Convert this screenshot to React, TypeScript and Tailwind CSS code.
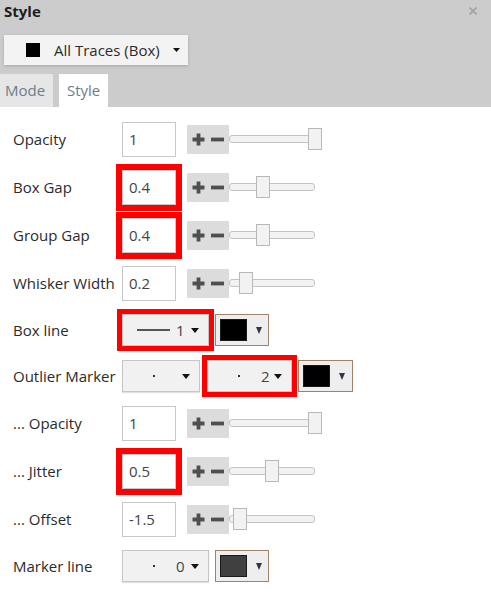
const sliderRows = [
  { label: 'Opacity', value: '1', pos: 1 },
  { label: 'Box Gap', value: '0.4', pos: 0.4, marked: true },
  { label: 'Group Gap', value: '0.4', pos: 0.4, marked: true },
  { label: 'Whisker Width', value: '0.2', pos: 0.2 },
]

const markerRows = [
  { label: '... Opacity', value: '1', pos: 1 },
  { label: '... Jitter', value: '0.5', pos: 0.5, marked: true },
  { label: '... Offset', value: '-1.5', pos: 0.125 },
]

function Caret({ className = '' }: { className?: string }) {
  return (
    <svg width="8" height="5" viewBox="0 0 8 5" className={className}>
      <polygon points="0,0 8,0 4,5" fill="#111" />
    </svg>
  )
}

function Stepper() {
  return (
    <div className="flex items-center w-[42px] h-[29px] bg-[#dcdcdc] pl-[5px]">
      <svg width="13" height="13" viewBox="0 0 13 13">
        <path d="M6.5 0.5V12.5M0.5 6.5H12.5" stroke="#4f4f4f" strokeWidth="3.8" />
      </svg>
      <svg width="13" height="13" viewBox="0 0 13 13" className="ml-[6px]">
        <path d="M0 6.5H13" stroke="#4f4f4f" strokeWidth="3.8" />
      </svg>
    </div>
  )
}

function Slider({ pos }: { pos: number }) {
  return (
    <div className="relative w-[86px] h-[22px] flex items-center">
      <div className="w-full h-[8px] rounded-[3px] border border-[#c4c4c4] bg-[#f2f2f2]" />
      <div
        className="absolute top-0 w-[14px] h-[22px] border border-[#b8b8b8] bg-[#f2f2f2]"
        style={{ left: `${pos * 86 - 7}px` }}
      />
    </div>
  )
}

function NumberRow({ label, value, pos, marked }: { label: string; value: string; pos: number; marked?: boolean }) {
  return (
    <div className="flex items-center h-12">
      <div className="w-[109px] text-[#2b2b2b]">{label}</div>
      <div
        className={
          'w-[54px] h-[35px] border border-[#c8c8c8] bg-white pl-[6px] flex items-center text-[#444] ' +
          (marked ? 'outline-[6px] outline-solid outline-[#ff0000]' : '')
        }
      >
        {value}
      </div>
      <div className="ml-[11px] flex items-center">
        <Stepper />
        <Slider pos={pos} />
      </div>
    </div>
  )
}

function Select({
  width,
  preview,
  num,
  marked,
}: {
  width: string
  preview: 'line' | 'dot'
  num?: string
  marked?: boolean
}) {
  return (
    <div
      className={
        width +
        ' h-[32px] border border-[#c6c6c6] bg-[#f1f1f1] shadow-[0_1px_1px_rgba(0,0,0,0.12)] flex items-center pl-[14px] pr-[9px] ' +
        (marked ? 'outline-[5px] outline-solid outline-[#ff0000]' : '')
      }
    >
      <div className="w-[33px] flex justify-center">
        {preview === 'line' ? (
          <div className="w-[33px] h-[2px] bg-[#555]" />
        ) : (
          <div className="w-[2px] h-[2px] bg-[#333]" />
        )}
      </div>
      {num && <span className="ml-[6px] text-[#444]">{num}</span>}
      <Caret className="ml-auto" />
    </div>
  )
}

function Swatch({ color, width }: { color: string; width: string }) {
  return (
    <div className={width + ' h-[32px] border border-[#a08268] bg-[#eeeeee] flex items-center pl-[4px]'}>
      <div className="w-[27px] h-[22px] border border-[#1a1a1a]" style={{ background: color }} />
      <svg width="6" height="7" viewBox="0 0 6 7" className="ml-[9px]">
        <polygon points="0,0 6,0 3,7" fill="#2f3747" />
      </svg>
    </div>
  )
}

export default function App() {
  return (
    <div className="w-[491px] h-[596px] overflow-hidden bg-white font-['Open_Sans',sans-serif] text-[15px]">
      <div className="bg-[#cccccc] pt-[1px]">
        <div className="flex items-center justify-between pl-1 pr-[14px] leading-5">
          <span className="font-bold text-[#1e1e1e]">Style</span>
          <svg width="8" height="8" viewBox="0 0 8 8">
            <path d="M0.5 0.5L7.5 7.5M7.5 0.5L0.5 7.5" stroke="#a3a3a3" strokeWidth="1.7" />
          </svg>
        </div>
        <div className="ml-1 mt-[14px] w-[184px] h-[30px] bg-[#f3f3f3] shadow-[0_1px_3px_rgba(0,0,0,0.18)] flex items-center pl-[22px] pr-[8px]">
          <div className="w-[14px] h-[14px] bg-black" />
          <span className="ml-[14px] text-[#2b2b2b]">All Traces (Box)</span>
          <svg width="7" height="4" viewBox="0 0 7 4" className="ml-auto">
            <polygon points="0,0 7,0 3.5,4" fill="#111" />
          </svg>
        </div>
        <div className="mt-[9px] flex gap-[6px] h-[33px] text-[#6f7c8e]">
          <div className="w-[53px] pl-[5px] bg-[#e6e6e6] flex items-center">Mode</div>
          <div className="w-[49px] pl-[8px] bg-white flex items-center">Style</div>
        </div>
      </div>

      <div className="pt-[8px] pl-[13px]">
        {sliderRows.map((r) => (
          <NumberRow key={r.label} {...r} />
        ))}

        <div className="flex items-center h-[46px]">
          <div className="w-[109px] text-[#2b2b2b]">Box line</div>
          <Select width="w-[87px]" preview="line" num="1" marked />
          <div className="ml-[6px]">
            <Swatch color="#000" width="w-[54px]" />
          </div>
        </div>

        <div className="flex items-center h-[46px]">
          <div className="w-[109px] text-[#2b2b2b]">Outlier Marker</div>
          <Select width="w-[78px]" preview="dot" />
          <div className="ml-[7px]">
            <Select width="w-[85px]" preview="dot" num="2" marked />
          </div>
          <div className="ml-[6px]">
            <Swatch color="#000" width="w-[55px]" />
          </div>
        </div>

        {markerRows.map((r) => (
          <NumberRow key={r.label} {...r} />
        ))}

        <div className="flex items-center h-[46px]">
          <div className="w-[109px] text-[#2b2b2b]">Marker line</div>
          <Select width="w-[87px]" preview="dot" num="0" />
          <div className="ml-[6px]">
            <Swatch color="#404040" width="w-[54px]" />
          </div>
        </div>
      </div>
    </div>
  )
}
